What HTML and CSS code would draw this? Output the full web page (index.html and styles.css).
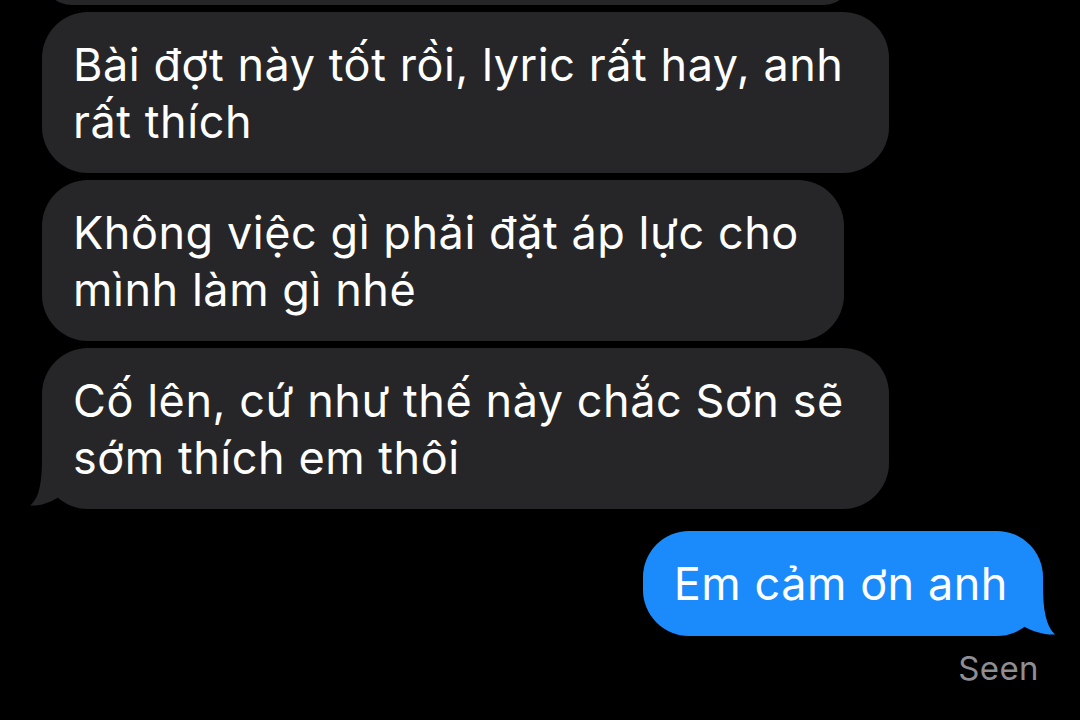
FILE: index.html
```
<!DOCTYPE html>
<html lang="vi">
<head>
<meta charset="utf-8">
<link rel="stylesheet" href="styles.css">
</head>
<body>
<div class="thread">
  <div class="bubble them partial"></div>
  <div class="bubble them">Bài đợt này tốt rồi, lyric rất hay, anh<br>rất thích</div>
  <div class="bubble them">Không việc gì phải đặt áp lực cho<br>mình làm gì nhé</div>
  <div class="bubble them">Cố lên, cứ như thế này chắc Sơn sẽ<br>sớm thích em thôi<svg class="tail" viewBox="0 0 34 50" width="34" height="50" aria-hidden="true"><path d="M12 0 C12 24 9 40 0 46.5 C11 47 21 43.5 30 37 L30 0 Z"/></svg></div>
  <div class="bubble me">Em cảm ơn anh<svg class="tail" viewBox="0 0 34 50" width="34" height="50" aria-hidden="true"><path d="M12 0 C12 24 9 40 0 48.5 C11 49 21 46 32 40 L32 0 Z"/></svg></div>
  <div class="status">Seen</div>
</div>
</body>
</html>
```
FILE: styles.css
```
html, body {
  margin: 0;
  padding: 0;
  background: #000;
  height: 100%;
  overflow: hidden;
}
body {
  font-family: Inter, "Noto Sans", sans-serif;
  color: #fff;
}
.thread {
  display: flex;
  flex-direction: column;
  gap: 7px;
  padding: 0 25px 0 42px;
}
.bubble {
  position: relative;
  font-size: 45px;
  line-height: 57px;
  letter-spacing: 0.55px;
  padding: 24px 45px 23px 31px;
  border-radius: 46px;
  white-space: nowrap;
  width: fit-content;
}
.them {
  background: #262629;
  fill: #262629;
  align-self: flex-start;
}
.partial {
  width: 811px;
  height: 60px;
  padding: 0;
  box-sizing: border-box;
  margin-top: -55px;
}
.me {
  background: #1b8bfc;
  fill: #1b8bfc;
  align-self: flex-end;
  margin-top: 15px;
  margin-right: 12px;
  padding: 24px 35px 24px 31px;
}
.tail {
  position: absolute;
  bottom: 0;
  display: block;
}
.them .tail {
  left: -12px;
}
.me .tail {
  right: -12px;
  transform: scaleX(-1);
}
.status {
  align-self: flex-end;
  margin-right: 16px;
  font-size: 33px;
  line-height: 40px;
  letter-spacing: 0.4px;
  color: #8e8e93;
  margin-top: 5px;
}
```
